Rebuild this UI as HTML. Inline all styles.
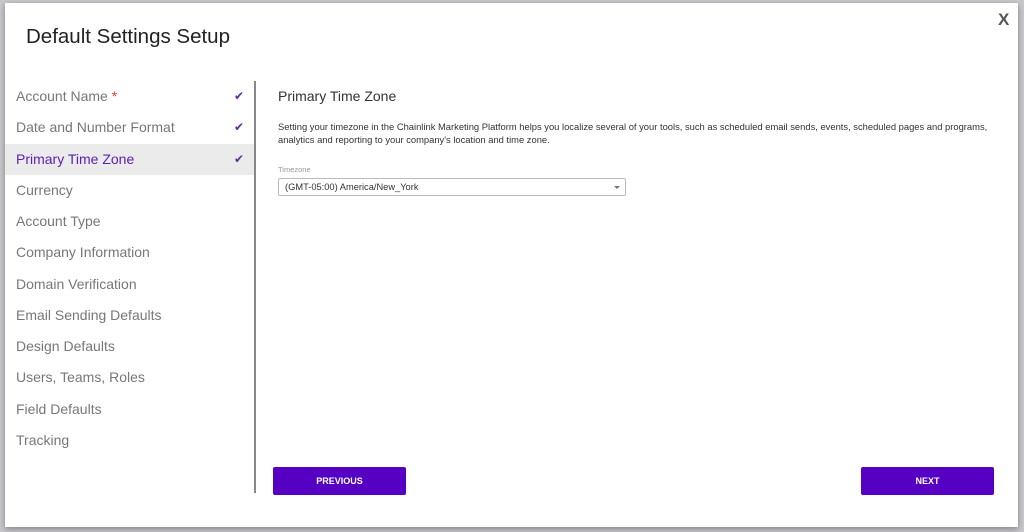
<!DOCTYPE html>
<html><head><style>
*{margin:0;padding:0;box-sizing:border-box}
body{width:1024px;height:532px;background:#c8c8cc;font-family:"Liberation Sans",sans-serif;position:relative;overflow:hidden}
.modal{position:absolute;left:5px;top:3px;width:1013px;height:524px;background:#fff;box-shadow:0 2px 6px rgba(0,0,0,.35)}
h1{position:absolute;left:21px;top:22px;font-weight:normal;font-size:20.5px;color:#222}
.x{position:absolute;left:993px;top:7px;font-size:17px;font-weight:bold;color:#555}
.nav{position:absolute;left:0;top:78px;width:249px}
.item{height:31.25px;line-height:31.25px;padding-left:11px;font-size:14px;color:#777;position:relative}
.item.act{background:#ebebeb;color:#5a1fb3}
.item .c{position:absolute;right:10px;top:0;color:#5a2d9e;font-size:12px}
.star{color:#e33}
.div{position:absolute;left:249px;top:78px;width:2px;height:412px;background:#888}
.h2{position:absolute;left:273px;top:85px;font-size:14px;color:#333}
.p{position:absolute;left:273px;top:118px;font-size:9.4px;line-height:12.5px;color:#333;width:725px}
.lbl{position:absolute;left:273px;top:162px;font-size:7.5px;color:#999}
.sel{position:absolute;left:273px;top:175px;width:348px;height:18px;border:1px solid #bbb;border-radius:2px;font-size:9.3px;color:#333;line-height:16px;padding-left:6px}
.sel:after{content:"";position:absolute;right:5px;top:7px;border:3px solid transparent;border-top:3px solid #777}
.btn{position:absolute;top:464px;width:133px;height:28px;background:#5600c4;border-radius:2px;color:#fff;font-size:9px;font-weight:bold;text-align:center;line-height:28px}
</style></head><body>
<div class="modal">
<h1>Default Settings Setup</h1>
<div class="x">X</div>
<div class="nav">
<div class="item">Account Name <span class="star">*</span><span class="c">✔</span></div>
<div class="item">Date and Number Format<span class="c">✔</span></div>
<div class="item act">Primary Time Zone<span class="c">✔</span></div>
<div class="item">Currency</div>
<div class="item">Account Type</div>
<div class="item">Company Information</div>
<div class="item">Domain Verification</div>
<div class="item">Email Sending Defaults</div>
<div class="item">Design Defaults</div>
<div class="item">Users, Teams, Roles</div>
<div class="item">Field Defaults</div>
<div class="item">Tracking</div>
</div>
<div class="div"></div>
<div class="h2">Primary Time Zone</div>
<div class="p">Setting your timezone in the Chainlink Marketing Platform helps you localize several of your tools, such as scheduled email sends, events, scheduled pages and programs, analytics and reporting to your company's location and time zone.</div>
<div class="lbl">Timezone</div>
<div class="sel">(GMT-05:00) America/New_York</div>
<div class="btn" style="left:268px">PREVIOUS</div>
<div class="btn" style="left:856px">NEXT</div>
</div>
</body></html>
